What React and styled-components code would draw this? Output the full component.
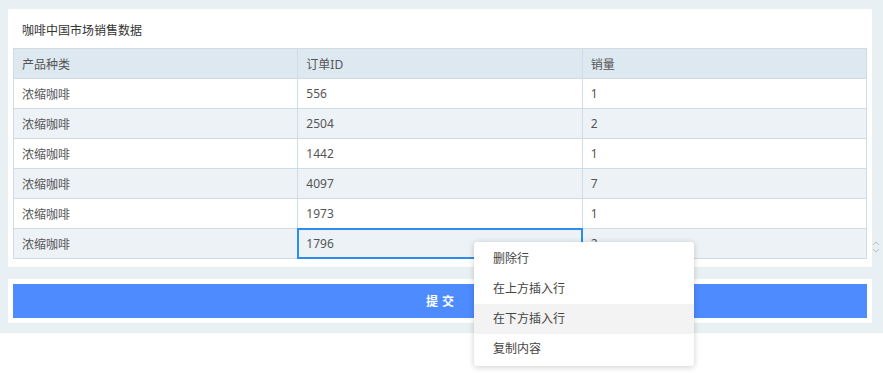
import React from "react";
import styled, { createGlobalStyle } from "styled-components";

const Global = createGlobalStyle`
  html, body { margin: 0; padding: 0; background: #fff; }
  body { font-family: "Noto Sans", "Noto Sans CJK SC", sans-serif; font-size: 12px; color: #555; }
`;

const Wrapper = styled.div`
  position: relative;
  background: #e9f0f4;
  padding: 9px 11px 10px 8px;
  display: flex;
  flex-direction: column;
  gap: 12px;
`;

const Panel = styled.div`
  background: #fff;
  padding: ${(p) => p.$pad};
`;

const Title = styled.div`
  height: 39px;
  line-height: 44px;
  padding-left: 9px;
  color: #333;
  font-size: 12px;
`;

const Table = styled.table`
  width: 100%;
  border-collapse: collapse;
  table-layout: fixed;
`;

const Th = styled.th`
  height: 29px;
  padding: 0 8px;
  text-align: left;
  font-weight: normal;
  background: #dee8f1;
  border: 1px solid #cfdbe5;
  color: #555;
`;

const Tr = styled.tr`
  background: ${(p) => (p.$striped ? "#edf2f6" : "#fff")};
`;

const Td = styled.td`
  position: relative;
  height: 29px;
  padding: 0 8px;
  border: 1px solid #cfdbe5;
  color: #555;
  &::after {
    content: "";
    display: ${(p) => (p.$selected ? "block" : "none")};
    position: absolute;
    left: -1px;
    top: -1px;
    right: -1px;
    bottom: -1px;
    border: 2px solid #2d8cf0;
    pointer-events: none;
  }
`;

const SubmitButton = styled.button`
  display: block;
  width: 100%;
  height: 34px;
  border: none;
  background: #4d8bff;
  color: #fff;
  font-family: "Noto Sans", "Noto Sans CJK SC", sans-serif;
  font-size: 12px;
  font-weight: bold;
  letter-spacing: 4px;
  text-indent: 4px;
  cursor: pointer;
`;

const Spinner = styled.div`
  position: absolute;
  left: 871px;
  top: 239px;
  width: 10px;
  height: 16px;
`;

const Menu = styled.ul`
  position: absolute;
  left: 474px;
  top: 242px;
  width: 220px;
  margin: 0;
  padding: 2px 0;
  list-style: none;
  background: #fff;
  border-radius: 3px;
  box-shadow: 0 1px 6px rgba(0, 0, 0, 0.2);
`;

const MenuItem = styled.li`
  height: 30px;
  line-height: 30px;
  padding-left: 19px;
  color: #444;
  background: ${(p) => (p.$active ? "#f3f3f3" : "transparent")};
`;

const rows = [
  ["浓缩咖啡", "556", "1"],
  ["浓缩咖啡", "2504", "2"],
  ["浓缩咖啡", "1442", "1"],
  ["浓缩咖啡", "4097", "7"],
  ["浓缩咖啡", "1973", "1"],
  ["浓缩咖啡", "1796", "2"],
];

export default function App() {
  return (
    <>
      <Global />
      <Wrapper>
        <Panel $pad="0 5px 8px 5px">
          <Title>咖啡中国市场销售数据</Title>
          <Table>
            <thead>
              <tr>
                <Th>产品种类</Th>
                <Th>订单ID</Th>
                <Th>销量</Th>
              </tr>
            </thead>
            <tbody>
              {rows.map((r, i) => (
                <Tr key={i} $striped={i % 2 === 1}>
                  <Td>{r[0]}</Td>
                  <Td $selected={i === 5}>{r[1]}</Td>
                  <Td>{r[2]}</Td>
                </Tr>
              ))}
            </tbody>
          </Table>
        </Panel>
        <Panel $pad="5px">
          <SubmitButton>提交</SubmitButton>
        </Panel>
        <Spinner>
          <svg width="10" height="16" viewBox="0 0 10 16" fill="none" stroke="#b8bec4" strokeWidth="1">
            <polyline points="2,6 5,3 8,6" />
            <polyline points="2,10 5,13 8,10" />
          </svg>
        </Spinner>
      </Wrapper>
      <Menu>
        <MenuItem>删除行</MenuItem>
        <MenuItem>在上方插入行</MenuItem>
        <MenuItem $active>在下方插入行</MenuItem>
        <MenuItem>复制内容</MenuItem>
      </Menu>
    </>
  );
}
